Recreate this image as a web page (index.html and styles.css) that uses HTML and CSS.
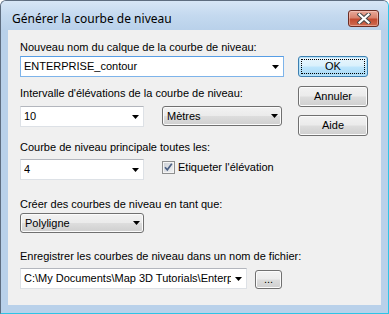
FILE: index.html
```html
<!DOCTYPE html>
<html lang="fr">
<head>
<meta charset="utf-8">
<title>Générer la courbe de niveau</title>
<link rel="stylesheet" href="styles.css">
</head>
<body>
<div class="window">
  <div class="titlebar">
    <span class="title">Générer la courbe de niveau</span>
    <div class="close">
      <svg width="14" height="11" viewBox="0 0 14 11">
        <path d="M2.5 1.5 L11.5 9.5 M11.5 1.5 L2.5 9.5" stroke="#4a4a4a" stroke-width="4.2" stroke-linecap="square" fill="none"/>
        <path d="M2.5 1.5 L11.5 9.5 M11.5 1.5 L2.5 9.5" stroke="#ffffff" stroke-width="2.2" stroke-linecap="square" fill="none"/>
      </svg>
    </div>
  </div>
  <div class="client">
    <div class="form">
      <div class="lbl l1">Nouveau nom du calque de la courbe de niveau:</div>
      <div class="combo edit focus full">
        <span class="val">ENTERPRISE_contour</span>
        <svg class="arrow" width="7" height="4" viewBox="0 0 7 4"><path d="M0 0H7L3.5 4Z" fill="#000"/></svg>
      </div>

      <div class="lbl l2">Intervalle d'élévations de la courbe de niveau:</div>
      <div class="row r2">
        <div class="combo edit small">
          <span class="val">10</span>
          <svg class="arrow" width="7" height="4" viewBox="0 0 7 4"><path d="M0 0H7L3.5 4Z" fill="#000"/></svg>
        </div>
        <div class="combo list units">
          <span class="val">Mètres</span>
          <svg class="arrow" width="7" height="4" viewBox="0 0 7 4"><path d="M0 0H7L3.5 4Z" fill="#000"/></svg>
        </div>
      </div>

      <div class="lbl l3">Courbe de niveau principale toutes les:</div>
      <div class="row r3">
        <div class="combo edit small">
          <span class="val">4</span>
          <svg class="arrow" width="7" height="4" viewBox="0 0 7 4"><path d="M0 0H7L3.5 4Z" fill="#000"/></svg>
        </div>
        <div class="check">
          <span class="box">
            <svg width="11" height="11" viewBox="0 0 11 11"><path d="M2 5.2 L4.3 7.8 L8.8 1.8" stroke="#4d6185" stroke-width="1.7" fill="none"/></svg>
          </span>
          <span class="ctext">Etiqueter l'élévation</span>
        </div>
      </div>

      <div class="lbl l4">Créer des courbes de niveau en tant que:</div>
      <div class="combo list small poly">
        <span class="val">Polyligne</span>
        <svg class="arrow" width="7" height="4" viewBox="0 0 7 4"><path d="M0 0H7L3.5 4Z" fill="#000"/></svg>
      </div>

      <div class="lbl l5">Enregistrer les courbes de niveau dans un nom de fichier:</div>
      <div class="row r5">
        <div class="combo edit path">
          <span class="val clip">C:\My Documents\Map 3D Tutorials\Enterp</span>
          <svg class="arrow" width="7" height="4" viewBox="0 0 7 4"><path d="M0 0H7L3.5 4Z" fill="#000"/></svg>
        </div>
        <div class="btn browse">...</div>
      </div>
    </div>
    <div class="buttons">
      <div class="btn default"><span class="focusrect">OK</span></div>
      <div class="btn b2">Annuler</div>
      <div class="btn b3">Aide</div>
    </div>
  </div>
</div>
</body>
</html>
```

FILE: styles.css
```css
html, body {
  margin: 0;
  padding: 0;
  background: #ffffff;
}

.window {
  width: 389px;
  height: 314px;
  box-sizing: border-box;
  display: flex;
  flex-direction: column;
  border: 1px solid #5e6d80;
  border-right-color: #2ec4e6;
  border-bottom-color: #2ec4e6;
  border-radius: 6px 6px 0 0;
  background: #b9d1ea;
  padding: 0 7px 8px 7px;
  overflow: hidden;
}

.titlebar {
  height: 29px;
  flex: none;
  display: flex;
  align-items: flex-start;
  margin: 0 -7px;
  padding: 0 7px 0 11px;
  background: linear-gradient(#d7e6f6 0%, #c4d9ef 50%, #b9d1ea 100%);
}

.title {
  font-family: "Noto Sans", "DejaVu Sans", sans-serif;
  font-size: 12px;
  line-height: 16px;
  margin-top: 10px;
  color: #000;
}

.close {
  margin-left: auto;
  margin-top: 9px;
  margin-right: 2px;
  width: 31px;
  height: 17px;
  box-sizing: border-box;
  border: 1px solid #6b2d24;
  border-radius: 3px;
  background: linear-gradient(#e9a99a 0%, #d9826d 45%, #c24a30 55%, #cf6c52 100%);
  box-shadow: inset 0 0 0 1px rgba(255, 220, 210, 0.45);
  display: flex;
  align-items: center;
  justify-content: center;
}

.client {
  flex: 1;
  background: #f0f0f0;
  display: flex;
  padding: 11px 0 0 12px;
  font-family: "Liberation Sans", Arial, sans-serif;
  font-size: 11px;
  color: #000;
}

.form {
  width: 264px;
  display: flex;
  flex-direction: column;
}

.lbl {
  line-height: 13px;
  white-space: nowrap;
}

.l2 { margin-top: 10px; }
.l3 { margin-top: 14px; }
.l4 { margin-top: 18px; }
.l5 { margin-top: 17px; }

.full { margin-top: 2px; }
.r2 { margin-top: 6px; }
.r3 { margin-top: 5px; }
.poly { margin-top: 2px; }
.r5 { margin-top: 5px; }

.row {
  display: flex;
  align-items: flex-start;
}

.combo {
  height: 21px;
  box-sizing: border-box;
  display: flex;
  align-items: center;
  padding: 0 4px 0 3px;
  line-height: 19px;
  white-space: nowrap;
}

.combo .val {
  flex: 1;
  overflow: hidden;
  min-width: 0;
}

.combo .arrow {
  flex: none;
  margin-left: 4px;
}

.edit {
  background: #ffffff;
  border: 1px solid #dde1e6;
  border-top-color: #b3b6bd;
}

.edit.focus {
  border-color: #7eb4ea;
  border-top-color: #569de5;
}

.list {
  border: 1px solid #707070;
  border-radius: 3px;
  background: linear-gradient(#f2f2f2 0%, #ebebeb 48%, #dddddd 52%, #cfcfcf 100%);
  box-shadow: inset 0 0 0 1px #fbfbfb;
  padding-left: 4px;
  padding-right: 3px;
}

.small {
  width: 124px;
}

.units {
  width: 120px;
  height: 20px;
  margin-left: 18px;
}

.poly {
  height: 20px;
}

.path {
  width: 227px;
}

.check {
  display: flex;
  align-items: center;
  margin-left: 18px;
  margin-top: 2px;
}

.box {
  width: 13px;
  height: 13px;
  box-sizing: border-box;
  border: 1px solid #8e8f8f;
  background: linear-gradient(135deg, #cbcfd5 0%, #f2f3f4 100%);
  box-shadow: inset 0 0 0 1px #f4f4f4;
  display: flex;
  align-items: center;
  justify-content: center;
}

.ctext {
  margin-left: 3px;
  line-height: 13px;
}

.buttons {
  display: flex;
  flex-direction: column;
  margin-left: 14px;
  margin-top: 15px;
}

.btn {
  width: 70px;
  height: 21px;
  box-sizing: border-box;
  border: 1px solid #707070;
  border-radius: 3px;
  background: linear-gradient(#f2f2f2 0%, #ebebeb 48%, #dddddd 52%, #cfcfcf 100%);
  box-shadow: inset 0 0 0 1px #fbfbfb;
  display: flex;
  align-items: center;
  justify-content: center;
  line-height: 13px;
}

.default {
  border-color: #3c7fb1;
  box-shadow: inset 0 0 0 1px #b9e3f9;
  background: linear-gradient(#eaf6fd 0%, #d9f0fc 48%, #bee6fd 52%, #a7d9f5 100%);
  padding: 2px;
}

.focusrect {
  flex: 1;
  align-self: stretch;
  border: 1px dotted #000;
  display: flex;
  align-items: center;
  justify-content: center;
}

.b2 { margin-top: 9px; }
.b3 { margin-top: 8px; height: 21px; }

.browse {
  width: 27px;
  height: 19px;
  margin-left: 8px;
  margin-top: 2px;
  align-items: flex-end;
  padding-bottom: 3px;
  line-height: 11px;
}
```
